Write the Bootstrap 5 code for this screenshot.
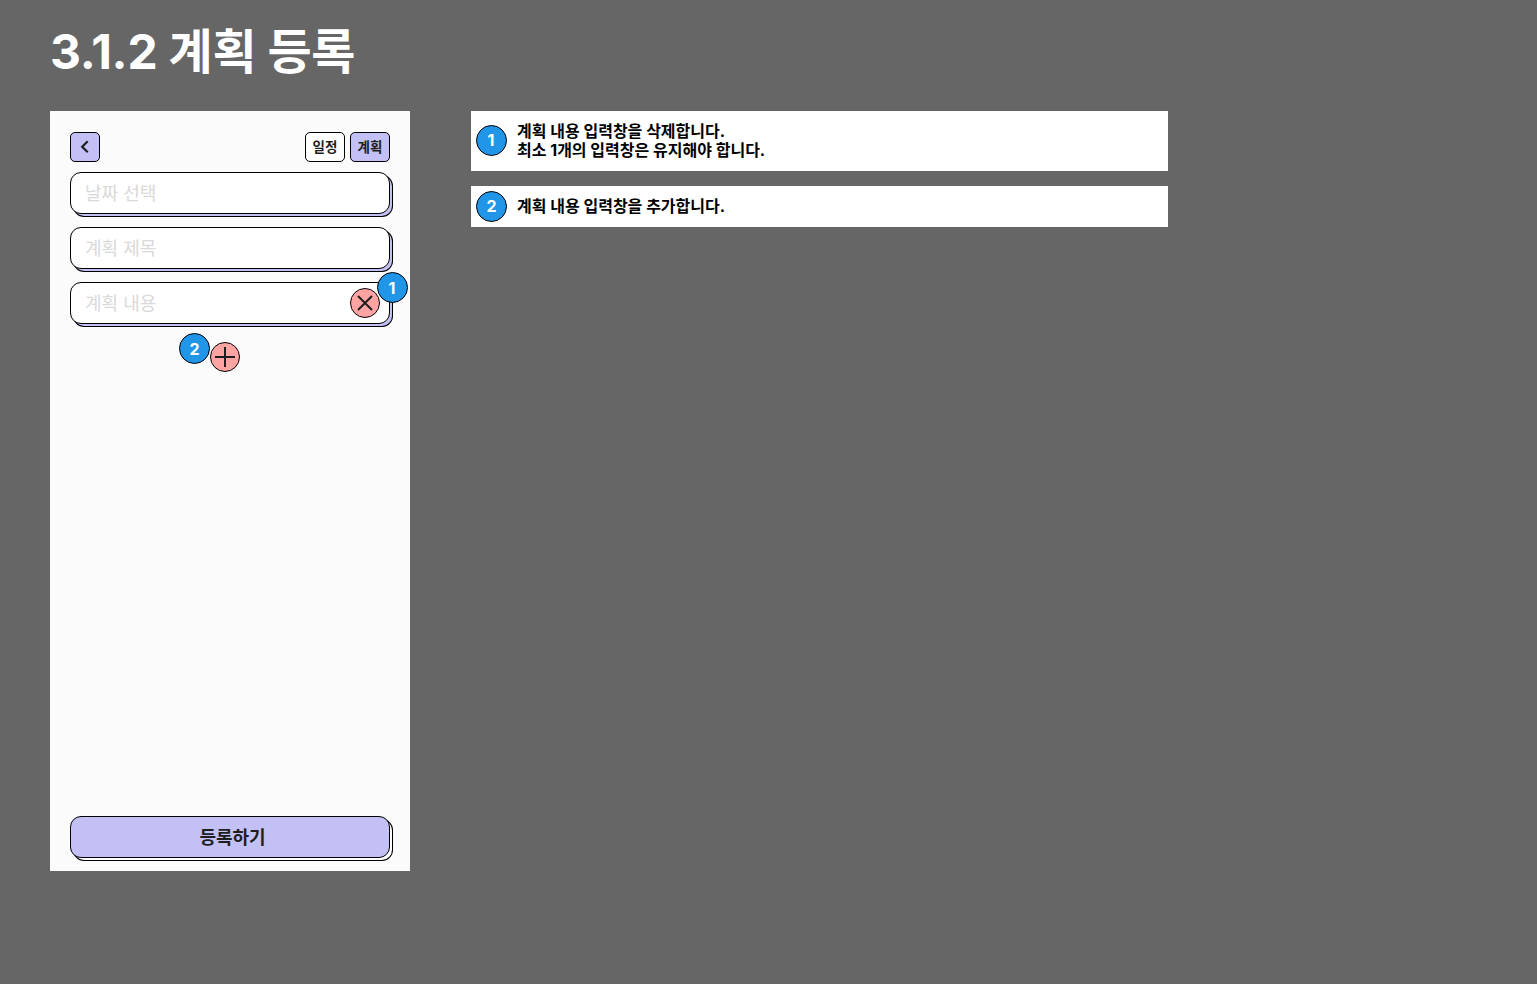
<!DOCTYPE html>
<html lang="ko">
<head>
<meta charset="utf-8">
<title>3.1.2 계획 등록</title>
<link href="https://cdn.jsdelivr.net/npm/bootstrap@5.3.0/dist/css/bootstrap.min.css" rel="stylesheet">
<style>
html,body{height:100%}
body{background:#666;font-family:Inter,"Noto Sans CJK KR",sans-serif;color:#000;padding:0 50px;overflow:hidden}
.page-title{font-size:48px;font-weight:700;color:#fff;line-height:58px;margin:0;padding-top:23px;height:111px;letter-spacing:-.25px}
.board{gap:61px}
.phone{width:360px;height:760px;background:#fbfbfb;padding:21px 20px 12px}
.ctl{border:1px solid #000;border-radius:5px;background:#fff;color:#1e1e1e;font-size:13.5px;font-weight:700;height:30px;line-height:28px;padding:0;text-align:center}
.ctl-on{background:#c2c0f5}
.ctl-back{width:30px}
.ctl-tab{width:40px}
.gap-tab{gap:5px}
.field{height:42px;width:320px;border:1px solid #000;border-radius:11px;background:#fff;box-shadow:3px 3px 0 -1px #c2c0f5,3px 3px 0 0 #000;padding:0 14px;font-size:18px;line-height:42px;color:#d9d9d9;margin-bottom:13px}
.fields{padding-top:10px}
.rel{position:relative}
.round-btn{width:30px;height:30px;border-radius:50%;background:#ffa3a3;border:1px solid #000;display:flex;align-items:center;justify-content:center;padding:0}
.btn-del{position:absolute;right:9px;top:5px}
.add-row{height:30px;margin-top:5px;padding-left:140px}
.num{width:31px;height:31px;border-radius:50%;background:#2196e8;border:1px solid #000;color:#fff;font-size:16px;font-weight:700;display:flex;align-items:center;justify-content:center;flex:none}
.num-1{position:absolute;left:306px;top:-11px;padding-right:1px}
.num-2{position:absolute;left:-32px;top:-10px}
.num-lift{margin-bottom:1px;padding-right:1px}
.submit{height:42px;width:320px;border:1px solid #000;border-radius:11px;background:#c2c0f5;box-shadow:3px 3px 0 -1px #fff,3px 3px 0 0 #000;font-size:18px;font-weight:700;color:#1e1e1e;text-align:center;line-height:42px;padding:0 0 0 5px;margin-bottom:1px}
.notes{width:697px;gap:15px}
.note{background:#fff;padding:0 5px;gap:10px;font-size:16px;font-weight:700;line-height:19px;color:#000}
.note-tall{height:60px}
.note-short{height:41px}
</style>
</head>
<body>
<h1 class="page-title">3.1.2 계획 등록</h1>
<div class="d-flex align-items-start board">
  <div class="phone d-flex flex-column">
    <div class="d-flex justify-content-between">
      <button class="ctl ctl-on ctl-back d-flex align-items-center justify-content-center" aria-label="뒤로">
        <svg width="12" height="14" viewBox="0 0 12 14"><path d="M8.7 1.3 3.2 6.8l5.5 5.5" fill="none" stroke="#1e1e1e" stroke-width="2.2"/></svg>
      </button>
      <div class="d-flex gap-tab">
        <button class="ctl ctl-tab">일정</button>
        <button class="ctl ctl-tab ctl-on">계획</button>
      </div>
    </div>
    <div class="fields">
      <div class="field">날짜 선택</div>
      <div class="field">계획 제목</div>
      <div class="field rel">계획 내용
        <button class="round-btn btn-del" aria-label="삭제"><svg width="18" height="18" viewBox="0 0 18 18"><path d="M2 2l14 14M16 2 2 16" stroke="#1e1e1e" stroke-width="2" fill="none"/></svg></button>
        <span class="num num-1">1</span>
      </div>
    </div>
    <div class="add-row d-flex">
      <button class="round-btn rel" aria-label="추가"><svg width="20" height="20" viewBox="0 0 20 20"><path d="M10 0v20M0 10h20" stroke="#1e1e1e" stroke-width="2" fill="none"/></svg><span class="num num-2">2</span></button>
    </div>
    <div class="mt-auto submit">등록하기</div>
  </div>
  <div class="notes d-flex flex-column">
    <div class="note note-tall d-flex align-items-center"><span class="num num-lift">1</span><div>계획 내용 입력창을 삭제합니다.<br>최소 1개의 입력창은 유지해야 합니다.</div></div>
    <div class="note note-short d-flex align-items-center"><span class="num">2</span><div>계획 내용 입력창을 추가합니다.</div></div>
  </div>
</div>
</body>
</html>
